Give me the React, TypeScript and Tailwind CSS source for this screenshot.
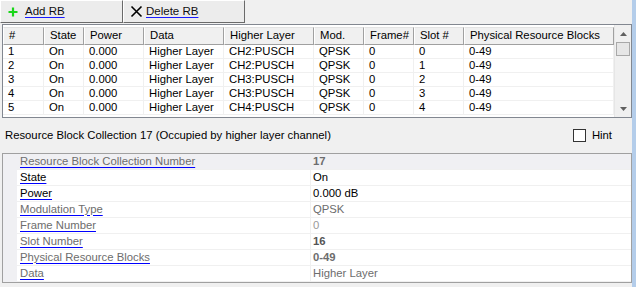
import React from 'react';

const cols = ['#', 'State', 'Power', 'Data', 'Higher Layer', 'Mod.', 'Frame#', 'Slot #', 'Physical Resource Blocks'];

const rows = [
  ['1', 'On', '0.000', 'Higher Layer', 'CH2:PUSCH', 'QPSK', '0', '0', '0-49'],
  ['2', 'On', '0.000', 'Higher Layer', 'CH2:PUSCH', 'QPSK', '0', '1', '0-49'],
  ['3', 'On', '0.000', 'Higher Layer', 'CH3:PUSCH', 'QPSK', '0', '2', '0-49'],
  ['4', 'On', '0.000', 'Higher Layer', 'CH3:PUSCH', 'QPSK', '0', '3', '0-49'],
  ['5', 'On', '0.000', 'Higher Layer', 'CH4:PUSCH', 'QPSK', '0', '4', '0-49'],
];

const props = [
  { label: 'Resource Block Collection Number', value: '17', labelCls: 'text-[#6d6d6d]', valueCls: 'text-[#6d6d6d] font-bold', rowCls: 'bg-[#f0f0f3]' },
  { label: 'State', value: 'On', labelCls: 'text-black', valueCls: 'text-black', rowCls: 'bg-white' },
  { label: 'Power', value: '0.000 dB', labelCls: 'text-black', valueCls: 'text-black', rowCls: 'bg-white' },
  { label: 'Modulation Type', value: 'QPSK', labelCls: 'text-[#6d6d6d]', valueCls: 'text-[#6d6d6d]', rowCls: 'bg-white' },
  { label: 'Frame Number', value: '0', labelCls: 'text-[#6d6d6d]', valueCls: 'text-[#9a9a9a]', rowCls: 'bg-white' },
  { label: 'Slot Number', value: '16', labelCls: 'text-[#6d6d6d]', valueCls: 'text-[#555] font-bold', rowCls: 'bg-white' },
  { label: 'Physical Resource Blocks', value: '0-49', labelCls: 'text-[#6d6d6d]', valueCls: 'text-[#6d6d6d] font-bold', rowCls: 'bg-white' },
  { label: 'Data', value: 'Higher Layer', labelCls: 'text-[#6d6d6d]', valueCls: 'text-[#6d6d6d]', rowCls: 'bg-white' },
];

const ToolButton: React.FC<{ icon: React.ReactNode; label: string; cls: string }> = ({ icon, label, cls }) => (
  <button
    className={`${cls} h-[23px] flex items-center bg-[#ececec] border border-t-white border-l-white border-r-[#6a6a6a] border-b-[#6a6a6a]`}
  >
    {icon}
    <span className="text-[11.5px] text-[#111] underline decoration-[#1a1aff] underline-offset-[2px]">{label}</span>
  </button>
);

const App: React.FC = () => {
  return (
    <div className="w-[636px] h-[287px] flex bg-[#f0f0f0] overflow-hidden font-['Liberation_Sans',Arial,sans-serif] text-[11.3px] leading-none text-black">
      <div className="flex-1 flex flex-col">
        {/* Toolbar */}
        <div className="flex h-[23px]">
          <ToolButton
            cls="w-[123px] pl-[7px] gap-[7px]"
            label="Add RB"
            icon={
              <svg width="10" height="10" viewBox="0 0 10 10">
                <path d="M5 0.5v9M0.5 5h9" stroke="#19d619" strokeWidth="2.2" />
              </svg>
            }
          />
          <ToolButton
            cls="w-[122px] pl-[6px] gap-[3px]"
            label="Delete RB"
            icon={
              <svg width="13" height="13" viewBox="0 0 13 13">
                <path d="M1.5 1.5l10 10M11.5 1.5l-10 10" stroke="#000" strokeWidth="1.6" />
              </svg>
            }
          />
        </div>

        {/* Table */}
        <div className="mt-[1px] ml-[2px] h-[94px] flex border border-[#828790] bg-white">
          <div className="flex-1 overflow-hidden">
            <div className="grid grid-cols-[41px_40px_60px_80px_90px_50px_50px_50px_150px] h-[18px] mt-[2px]">
              {cols.map((c) => (
                <div
                  key={c}
                  className="flex items-center pl-[5px] bg-[#f0f0f0] border border-t-[#e3e3e3] border-l-white border-r-[#a0a0a0] border-b-[#a0a0a0]"
                >
                  {c}
                </div>
              ))}
            </div>
            {rows.map((r, i) => (
              <div key={i} className="grid grid-cols-[41px_40px_60px_80px_90px_50px_50px_50px_150px] h-[14px] border-b border-[#f0f0f0]">
                {r.map((v, j) => (
                  <div key={j} className="flex items-center pl-[5px] border-r border-[#f0f0f0]">
                    {v}
                  </div>
                ))}
              </div>
            ))}
          </div>
          {/* Scrollbar */}
          <div className="w-[17px] flex flex-col bg-[#f0f0f0] border-l border-[#e6e6e6]">
            <div className="h-[17px] flex items-center justify-center">
              <svg width="7" height="4" viewBox="0 0 7 4">
                <path d="M0 4L3.5 0L7 4z" fill="#606060" />
              </svg>
            </div>
            <div className="mx-[1px] h-[14px] bg-[#e6e6e6] border border-[#a8a8a8]" />
            <div className="flex-1" />
            <div className="h-[17px] flex items-center justify-center">
              <svg width="7" height="4" viewBox="0 0 7 4">
                <path d="M0 0L3.5 4L7 0z" fill="#606060" />
              </svg>
            </div>
          </div>
        </div>

        {/* Caption + hint */}
        <div className="h-[35px] flex items-center justify-between pl-[5px] pr-[20px]">
          <span>Resource Block Collection 17 (Occupied by higher layer channel)</span>
          <label className="flex items-center gap-[6px]">
            <span className="w-[13px] h-[13px] bg-white border border-[#333]" />
            <span>Hint</span>
          </label>
        </div>

        {/* Property grid */}
        <div className="ml-[2px] h-[130px] flex border border-[#a0a0a0] bg-white">
          <div className="w-[14px] bg-[#f0f0f3]" />
          <div className="flex-1 flex flex-col">
            {props.map((p) => (
              <div key={p.label} className={`h-[16px] flex border-b border-[#f0f0f0] ${p.rowCls}`}>
                <div className="w-[294px] flex items-center pl-[3px] border-r border-[#f0f0f0]">
                  <span className={`${p.labelCls} underline decoration-[#0000ff] underline-offset-[2px]`}>{p.label}</span>
                </div>
                <div className={`flex-1 flex items-center pl-[2px] ${p.valueCls}`}>{p.value}</div>
              </div>
            ))}
          </div>
        </div>
      </div>
      <div className="w-[4px] bg-[#b4cdea]" />
    </div>
  );
};

export default App;
